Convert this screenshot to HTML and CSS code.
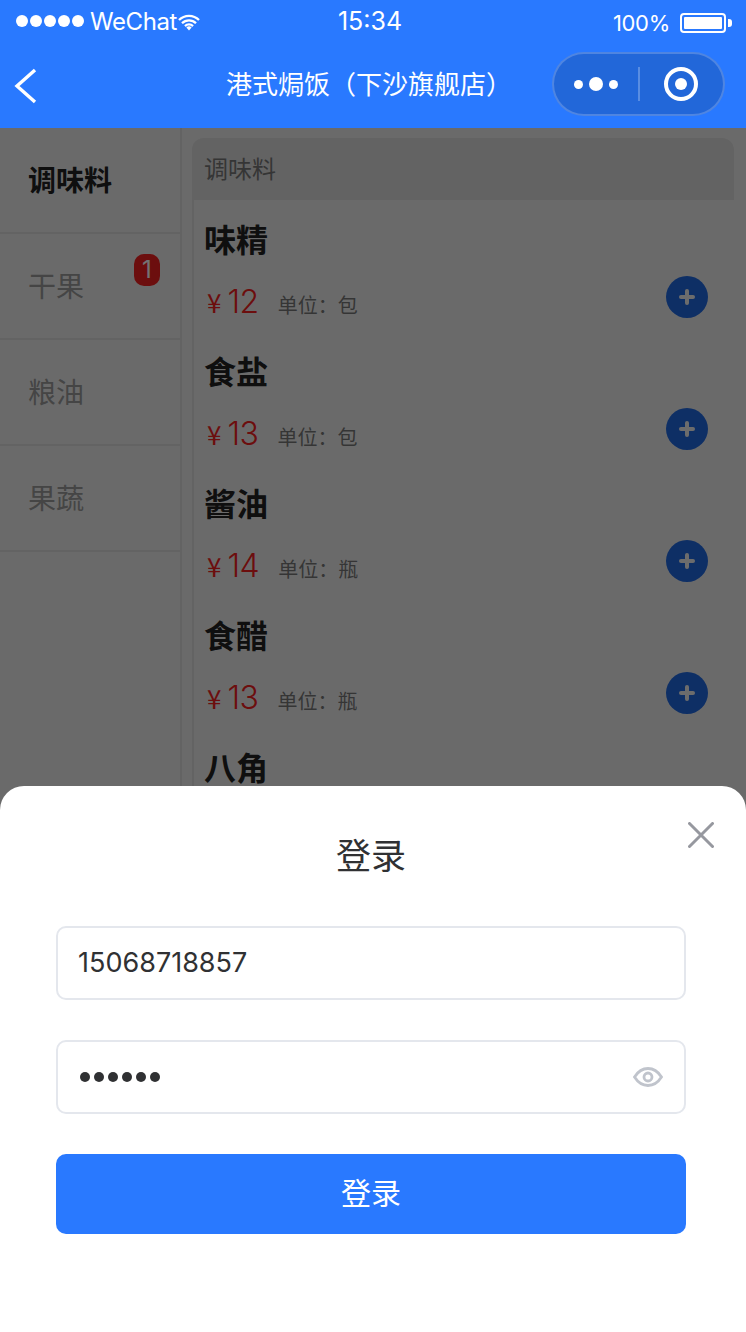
FILE: index.html
```html
<!DOCTYPE html>
<html lang="zh-CN">
<head>
<meta charset="UTF-8" />
<meta name="viewport" content="width=device-width, initial-scale=1.0" />
<title>港式焗饭（下沙旗舰店）</title>
<link rel="stylesheet" href="styles.css">
</head>
<body>
  <div class="statusbar">
    <div class="status-left">
      <span class="signal"><i></i><i></i><i></i><i></i><i></i></span>
      <span class="carrier">WeChat</span>
      <svg class="wifi" width="22" height="17" viewBox="0 0 22 16">
        <path d="M1 5.500a14 14 0 0 1 20 0M4 8.700a10 10 0 0 1 14 0M7 11.600a5.600 5.600 0 0 1 8 0" fill="none" stroke="#fff" stroke-width="2.300"/>
        <path d="M8.400 13a3.600 3.600 0 0 1 5.200 0L11 16z" fill="#fff"/>
      </svg>
    </div>
    <div class="status-time">15:34</div>
    <div class="status-right">
      <span class="percent">100%</span>
      <span class="battery"><span class="battery-fill"></span></span>
      <span class="battery-tip"></span>
    </div>
  </div>

  <div class="navbar">
    <svg class="back" width="24" height="36" viewBox="0 0 24 36">
      <path d="M21 2L3 18l18 16" fill="none" stroke="#fff" stroke-width="3.400"/>
    </svg>
    <div class="nav-title">港式焗饭（下沙旗舰店）</div>
    <div class="capsule">
      <span class="capsule-dots"><i></i><i class="big"></i><i></i></span>
      <span class="capsule-line"></span>
      <span class="capsule-target"><i></i></span>
    </div>
  </div>

  <div class="main">
    <div class="sidebar">
      <div class="side-item active">调味料</div>
      <div class="side-item">干果<span class="badge">1</span></div>
      <div class="side-item">粮油</div>
      <div class="side-item">果蔬</div>
    </div>
    <div class="panel">
      <div class="card">
        <div class="card-head">调味料</div>
        <div class="goods">
          <div class="goods-name">味精</div>
          <div class="goods-row">
            <span class="yen">¥</span><span class="price">12</span><span class="unit">单位：包</span>
            <span class="add"></span>
          </div>
        </div>
        <div class="goods">
          <div class="goods-name">食盐</div>
          <div class="goods-row">
            <span class="yen">¥</span><span class="price">13</span><span class="unit">单位：包</span>
            <span class="add"></span>
          </div>
        </div>
        <div class="goods">
          <div class="goods-name">酱油</div>
          <div class="goods-row">
            <span class="yen">¥</span><span class="price">14</span><span class="unit">单位：瓶</span>
            <span class="add"></span>
          </div>
        </div>
        <div class="goods">
          <div class="goods-name">食醋</div>
          <div class="goods-row">
            <span class="yen">¥</span><span class="price">13</span><span class="unit">单位：瓶</span>
            <span class="add"></span>
          </div>
        </div>
        <div class="goods">
          <div class="goods-name">八角</div>
        </div>
      </div>
    </div>
  </div>

  <div class="mask"></div>

  <div class="popup">
    <div class="popup-title">登录</div>
    <svg class="close" width="26" height="26" viewBox="0 0 26 26">
      <path d="M1.500 1.500l23 23M24.500 1.500l-23 23" stroke="#96989f" stroke-width="3" stroke-linecap="round"/>
    </svg>
    <div class="field">15068718857</div>
    <div class="field field-pwd">
      <span class="dots"><i></i><i></i><i></i><i></i><i></i><i></i></span>
      <svg class="eye" width="30" height="22" viewBox="0 0 30 22">
        <path d="M1.500 11C5 5.500 9.500 2.500 15 2.500S25 5.500 28.500 11C25 16.500 20.500 19.500 15 19.500S5 16.500 1.500 11z" fill="none" stroke="#c0c4cc" stroke-width="2.800"/>
        <circle cx="15" cy="11" r="4" fill="none" stroke="#c0c4cc" stroke-width="2.800"/>
      </svg>
    </div>
    <button class="login-btn">登录</button>
  </div>
</body>
</html>
```

FILE: styles.css
```css
* {
  box-sizing: border-box;
}
html, body {
  margin: 0;
  padding: 0;
}
body {
  position: relative;
  width: 746px;
  height: 1332px;
  overflow: hidden;
  background: #ececec;
  font-family: "Noto Sans CJK SC", "Noto Sans", sans-serif;
  color: #222;
}
i {
  display: block;
}

.statusbar {
  height: 44px;
  display: grid;
  grid-template-columns: 1fr auto 1fr;
  align-items: center;
  padding: 0 14px 2px 16px;
  background: #2979ff;
  color: #fff;
  font-family: Inter, "Liberation Sans", sans-serif;
}
.status-left {
  display: flex;
  align-items: center;
}
.signal {
  display: flex;
  gap: 2px;
}
.signal i {
  width: 12px;
  height: 12px;
  border-radius: 50%;
  background: #fff;
}
.carrier {
  margin-left: 6px;
  font-size: 24px;
  letter-spacing: -0.4px;
}
.wifi {
  margin-top: 2px;
  margin-left: 1px;
}
.status-time {
  margin-right: 8px;
  font-size: 25px;
}
.status-right {
  display: flex;
  align-items: center;
  justify-content: flex-end;
  padding-top: 4px;
}
.percent {
  font-size: 22px;
  margin-right: 10px;
  letter-spacing: -0.3px;
}
.battery {
  width: 46px;
  height: 20px;
  border: 2px solid #fff;
  border-radius: 4px;
  padding: 2px;
  display: flex;
}
.battery-fill {
  flex: 1;
  background: #fff;
  border-radius: 1px;
}
.battery-tip {
  width: 4px;
  height: 8px;
  margin-left: 2px;
  background: #fff;
  border-radius: 0 3px 3px 0;
}

.navbar {
  position: relative;
  height: 84px;
  display: flex;
  align-items: center;
  justify-content: space-between;
  padding: 0 21px 0 14px;
  background: #2979ff;
}
.back {
  margin-top: -1px;
}
.nav-title {
  position: absolute;
  left: 0;
  right: 8px;
  top: 21px;
  text-align: center;
  font-size: 26px;
  line-height: 36px;
  color: #fff;
}
.capsule {
  width: 173px;
  height: 64px;
  margin-top: -4px;
  display: flex;
  align-items: center;
  border: 2px solid rgba(255, 255, 255, 0.2);
  border-radius: 32px;
  background: rgba(0, 0, 0, 0.15);
}
.capsule-dots {
  width: 84px;
  display: flex;
  align-items: center;
  justify-content: center;
  gap: 6px;
}
.capsule-dots i {
  width: 9px;
  height: 9px;
  border-radius: 50%;
  background: #fff;
}
.capsule-dots i.big {
  width: 14px;
  height: 14px;
}
.capsule-line {
  width: 2px;
  height: 34px;
  background: rgba(255, 255, 255, 0.25);
}
.capsule-target {
  width: 34px;
  height: 34px;
  margin-left: 24px;
  border: 4px solid #fff;
  border-radius: 50%;
  display: flex;
  align-items: center;
  justify-content: center;
}
.capsule-target i {
  width: 12px;
  height: 12px;
  border-radius: 50%;
  background: #fff;
}

.main {
  display: flex;
  height: 658px;
}
.sidebar {
  width: 182px;
  border-right: 2px solid #dcdcdc;
}
.side-item {
  position: relative;
  height: 106px;
  padding: 0 28px 2px;
  display: flex;
  align-items: center;
  border-bottom: 2px solid #dcdcdc;
  font-size: 28px;
  color: #999;
}
.side-item.active {
  font-weight: 700;
  color: #222;
}
.badge {
  position: absolute;
  top: 20px;
  right: 20px;
  width: 26px;
  height: 32px;
  border-radius: 10px;
  background: #f02020;
  color: #fff;
  font-family: Inter, "Liberation Sans", sans-serif;
  font-size: 24px;
  line-height: 32px;
  text-align: center;
}
.panel {
  flex: 1;
  padding: 10px 12px 0 10px;
}
.card {
  border-left: 2px solid #dcdcdc;
  border-radius: 12px 12px 0 0;
}
.card-head {
  height: 62px;
  margin-left: -2px;
  padding-left: 12px;
  border-radius: 12px 12px 0 0;
  background: #dcdcdc;
  font-size: 24px;
  line-height: 60px;
  color: #777;
}
.goods {
  height: 132px;
  padding: 14px 0 0 10px;
}
.goods-name {
  font-size: 32px;
  line-height: 48px;
  font-weight: 700;
  color: #222;
}
.goods-row {
  position: relative;
  display: flex;
  align-items: baseline;
  height: 60px;
  padding-top: 19px;
  color: #f02020;
}
.yen {
  margin-left: 3px;
  font-size: 26px;
  line-height: 42px;
}
.price {
  margin-left: 6px;
  font-family: Inter, "Liberation Sans", sans-serif;
  font-size: 32px;
  line-height: 42px;
  font-weight: 300;
  letter-spacing: -0.5px;
}
.unit {
  margin-left: 19px;
  font-size: 20px;
  color: #777;
}
.add {
  position: absolute;
  top: 14px;
  right: 26px;
  width: 42px;
  height: 42px;
  border-radius: 50%;
  background: #2068e0;
}
.add::before, .add::after {
  content: "";
  position: absolute;
  left: 13px;
  top: 19px;
  width: 16px;
  height: 4px;
  border-radius: 2px;
  background: #f0f0f0;
}
.add::after {
  transform: rotate(90deg);
}

.mask {
  position: absolute;
  left: 0;
  right: 0;
  top: 128px;
  bottom: 0;
  background: rgba(0, 0, 0, 0.55);
}

.popup {
  position: absolute;
  left: 0;
  right: 0;
  top: 786px;
  bottom: 0;
  padding: 0 60px 0 56px;
  background: #fff;
  border-radius: 24px 24px 0 0;
}
.popup-title {
  height: 140px;
  padding: 42px 0 0;
  text-align: center;
  font-size: 35px;
  line-height: 52px;
  color: #303133;
}
.close {
  position: absolute;
  top: 36px;
  right: 32px;
}
.field {
  display: flex;
  align-items: center;
  justify-content: space-between;
  height: 74px;
  margin-bottom: 40px;
  padding: 0 36px 2px 20px;
  border: 2px solid #e4e7ed;
  border-radius: 10px;
  font-family: Inter, "Liberation Sans", sans-serif;
  font-size: 27px;
  color: #303133;
}
.field-pwd {
  padding: 0 21px 0 22px;
}
.dots {
  display: flex;
  gap: 4px;
}
.dots i {
  width: 10px;
  height: 10px;
  border-radius: 50%;
  background: #303133;
}
.login-btn {
  display: block;
  width: 100%;
  height: 80px;
  padding: 0 0 6px;
  border: none;
  border-radius: 10px;
  background: #2979ff;
  color: #fff;
  font-family: "Noto Sans CJK SC", "Noto Sans", sans-serif;
  font-size: 30px;
}
```
